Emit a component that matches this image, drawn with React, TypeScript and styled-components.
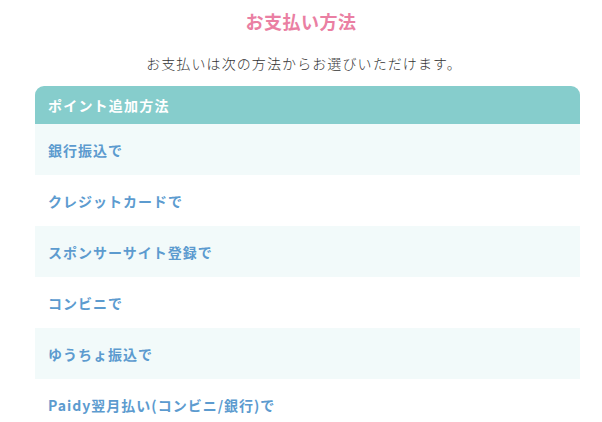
import React from 'react';
import styled, { createGlobalStyle } from 'styled-components';

const GlobalStyle = createGlobalStyle`
  body {
    margin: 0;
    background: #fff;
    font-family: 'Noto Sans CJK JP', 'Noto Sans', sans-serif;
  }
`;

const methods = [
  '銀行振込で',
  'クレジットカードで',
  'スポンサーサイト登録で',
  'コンビニで',
  'ゆうちょ振込で',
  'Paidy翌月払い(コンビニ/銀行)で',
];

const App = () => {
  return (
    <>
      <GlobalStyle />
      <Page>
        <Title>お支払い方法</Title>
        <Lead>お支払いは次の方法からお選びいただけます。</Lead>
        <Table>
          <Head>ポイント追加方法</Head>
          {methods.map((label, i) => (
            <Row key={label} $striped={i % 2 === 0}>
              {label}
            </Row>
          ))}
        </Table>
      </Page>
    </>
  );
};

export default App;

const Page = styled.div`
  width: 602px;
  padding-top: 8px;
`;

const Title = styled.h1`
  margin: 0;
  text-align: center;
  font-size: 18px;
  line-height: 26px;
  font-weight: 700;
  letter-spacing: 0.5px;
  color: #ea7fa3;
`;

const Lead = styled.p`
  margin: 19px 0 0;
  text-align: center;
  font-size: 14px;
  line-height: 20px;
  font-weight: 300;
  letter-spacing: 1.1px;
  color: #333;
  padding-left: 6px;
`;

const Table = styled.div`
  margin: 13px 0 0 35px;
  width: 545px;
`;

const Head = styled.div`
  height: 38px;
  display: flex;
  align-items: center;
  padding-left: 13px;
  background: #86cdcc;
  border-radius: 9px 9px 0 0;
  color: #fff;
  font-size: 14px;
  font-weight: 700;
  letter-spacing: 1.2px;
`;

const Row = styled.div<{ $striped: boolean }>`
  height: 51px;
  display: flex;
  align-items: center;
  padding-left: 13px;
  background: ${(p) => (p.$striped ? '#f2fafa' : '#fff')};
  color: #5c9bcf;
  font-size: 14px;
  font-weight: 700;
  letter-spacing: 1px;
`;
